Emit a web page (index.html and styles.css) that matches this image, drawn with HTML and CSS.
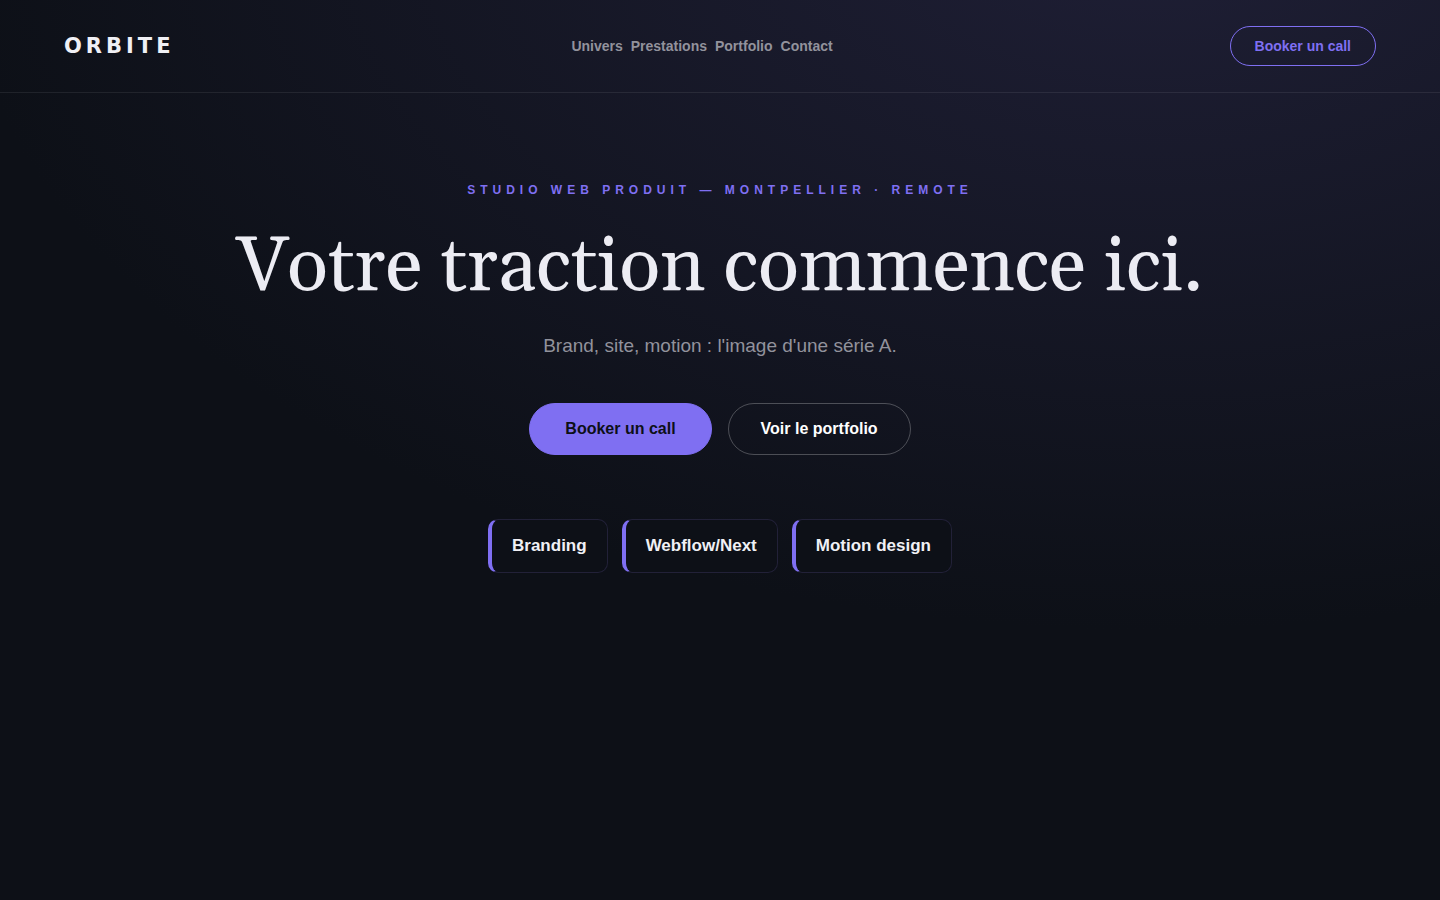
FILE: index.html
```html
<!DOCTYPE html>
<html lang="fr">
<head>
<meta charset="utf-8">
<meta name="viewport" content="width=device-width, initial-scale=1">
<title>Orbite</title>
<link rel="stylesheet" href="styles.css">
</head>
<body>
<div class="page">
  <header class="header">
    <a class="logo" href="#">ORBITE</a>
    <nav class="nav">
      <a href="#univers">Univers</a>
      <a href="#prestations">Prestations</a>
      <a href="#portfolio">Portfolio</a>
      <a href="#contact">Contact</a>
    </nav>
    <button class="button button-small" type="button">Booker un call</button>
  </header>
  <main class="hero">
    <p class="eyebrow">Studio web produit — Montpellier · Remote</p>
    <h1 class="title">Votre traction commence ici.</h1>
    <p class="lead">Brand, site, motion : l'image d'une série A.</p>
    <div class="actions">
      <button class="button button-primary" type="button">Booker un call</button>
      <button class="button button-ghost" type="button">Voir le portfolio</button>
    </div>
    <ul class="services">
      <li>Branding</li>
      <li>Webflow/Next</li>
      <li>Motion design</li>
    </ul>
  </main>
</div>
</body>
</html>
```
FILE: styles.css
```css
* {
  box-sizing: border-box;
}

body {
  margin: 0;
  background: #0d1017;
  color: #f0f0f5;
  font-family: "Liberation Sans", Arial, sans-serif;
}

.page {
  min-height: 100vh;
  background: radial-gradient(1200px 720px at 80% -10%, #1f1f36, #0d1017);
}

.header {
  display: flex;
  align-items: center;
  justify-content: space-between;
  padding: 26px 64px;
  border-bottom: 1px solid rgba(255, 255, 255, 0.08);
}

.logo {
  color: inherit;
  font-family: "DejaVu Sans", sans-serif;
  font-size: 21px;
  font-weight: 900;
  letter-spacing: 4px;
  text-decoration: none;
}

.nav {
  display: flex;
  gap: 8px;
}

.nav a {
  color: #92929c;
  font-size: 14px;
  font-weight: 600;
  text-decoration: none;
}

.button {
  border: 1px solid transparent;
  border-radius: 999px;
  font-family: inherit;
  font-size: 16px;
  font-weight: 700;
  line-height: 18px;
  cursor: pointer;
}

.button-small {
  padding: 10px 24px;
  border-color: #7f6ff2;
  background: transparent;
  color: #7f6ff2;
  font-size: 14px;
}

.button-primary {
  padding: 16px 35px;
  background: #7f6ff2;
  border-color: #7f6ff2;
  color: #0d1017;
}

.button-ghost {
  padding: 16px 32px;
  border-color: rgba(255, 255, 255, 0.25);
  background: transparent;
  color: #ffffff;
}

.hero {
  display: flex;
  flex-direction: column;
  align-items: center;
  padding: 88px 64px;
  text-align: center;
}

.eyebrow {
  margin: 0 0 29px;
  color: #7f6ff2;
  font-size: 12px;
  font-weight: 700;
  line-height: 18px;
  letter-spacing: 5px;
  text-transform: uppercase;
}

.title {
  margin: 0 0 23px;
  color: #ececf3;
  font-family: Georgia, Gelasio, "Liberation Serif", serif;
  font-size: 76px;
  font-weight: 400;
  line-height: 80px;
}

.lead {
  margin: 0 0 42px;
  color: #92929c;
  font-size: 19px;
  line-height: 30px;
}

.actions {
  display: flex;
  flex-wrap: wrap;
  justify-content: center;
  gap: 16px;
  margin-bottom: 64px;
}

.services {
  display: flex;
  flex-wrap: wrap;
  justify-content: center;
  gap: 14px;
  margin: 0;
  padding: 0;
  list-style: none;
}

.services li {
  padding: 16px 20px;
  border: 1px solid #222138;
  border-left: 4px solid #7f6ff2;
  border-radius: 10px;
  background: #0d1017;
  font-size: 17px;
  font-weight: 700;
  line-height: 20px;
}
```
